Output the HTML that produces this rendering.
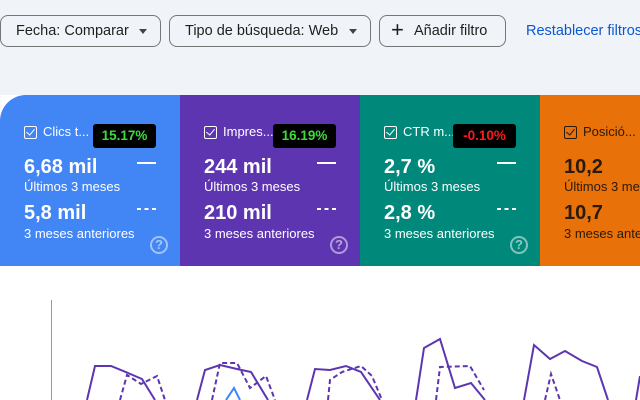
<!DOCTYPE html>
<html><head><meta charset="utf-8"><style>
*{margin:0;padding:0;box-sizing:border-box}
html,body{width:640px;height:400px;overflow:hidden}
body{background:#fff;font-family:"Liberation Sans",sans-serif;position:relative}
.top{position:absolute;left:0;top:0;width:640px;height:95px;background:#f0f4f9;overflow:hidden}
.btn{position:absolute;top:15px;height:32px;border:1px solid #747775;border-radius:8px;font-size:14.5px;color:#1f1f1f;line-height:30px;padding-left:15px}
.btn .arr{position:absolute;right:13px;top:13px;width:0;height:0;border-left:4px solid transparent;border-right:4px solid transparent;border-top:5px solid #444}
.link{position:absolute;left:526px;top:23px;font-size:14.5px;color:#0b57d0;white-space:nowrap}
.card{position:absolute;top:95px;height:171px;width:180px;color:#fff;overflow:hidden}
.cb{position:absolute;left:24px;top:31px;width:13px;height:13px;border:1.5px solid currentColor;border-radius:2px}
.cb:after{content:"";position:absolute;left:3px;top:0px;width:4px;height:7px;border-right:1.5px solid currentColor;border-bottom:1.5px solid currentColor;transform:rotate(40deg)}
.lab{position:absolute;left:43px;top:29px;font-size:13px}
.badge{position:absolute;left:93px;top:29px;width:63px;height:24px;background:#000;border-radius:3px;font-size:13.5px;font-weight:bold;text-align:center;line-height:24px}
.v{position:absolute;left:24px;font-size:20px;font-weight:bold}
.s{position:absolute;left:24px;font-size:13px}
.ln{position:absolute;left:137px;width:19px;height:2px;background:currentColor}
.ln.d{background:linear-gradient(90deg,currentColor 0 4px,transparent 4px 7.5px,currentColor 7.5px 11.5px,transparent 11.5px 15px,currentColor 15px 19px)}
.q{position:absolute;left:150px;top:141px;width:18px;height:18px;border:2px solid rgba(255,255,255,.5);border-radius:50%;font-size:13px;color:rgba(255,255,255,.55);text-align:center;line-height:14px;font-weight:bold}
</style></head><body>
<div class="top">
<div class="btn" style="left:0;width:161px">Fecha: Comparar<span class="arr"></span></div>
<div class="btn" style="left:169px;width:202px">Tipo de búsqueda: Web<span class="arr"></span></div>
<div class="btn" style="left:379px;width:127px;padding-left:34px"><span style="position:absolute;left:11px;top:-1px;font-size:22px;font-weight:300">+</span>Añadir filtro</div>
<div class="link">Restablecer filtros</div>
</div>
<div class="card" style="left:0;background:#4285f4;border-top-left-radius:26px">
<div class="cb"></div><div class="lab">Clics t...</div><div class="badge" style="color:#3ddc3d">15.17%</div>
<div class="v" style="top:61px">6,68 mil</div><div class="ln" style="top:67px"></div>
<div class="s" style="top:84px">Últimos 3 meses</div>
<div class="v" style="top:107px">5,8 mil</div><div class="ln d" style="top:113px"></div>
<div class="s" style="top:131px">3 meses anteriores</div><div class="q">?</div></div>
<div class="card" style="left:180px;background:#5e35b1">
<div class="cb"></div><div class="lab">Impres...</div><div class="badge" style="color:#3ddc3d">16.19%</div>
<div class="v" style="top:61px">244 mil</div><div class="ln" style="top:67px"></div>
<div class="s" style="top:84px">Últimos 3 meses</div>
<div class="v" style="top:107px">210 mil</div><div class="ln d" style="top:113px"></div>
<div class="s" style="top:131px">3 meses anteriores</div><div class="q">?</div></div>
<div class="card" style="left:360px;background:#00897b">
<div class="cb"></div><div class="lab">CTR m...</div><div class="badge" style="color:#ff1a1a">-0.10%</div>
<div class="v" style="top:61px">2,7 %</div><div class="ln" style="top:67px"></div>
<div class="s" style="top:84px">Últimos 3 meses</div>
<div class="v" style="top:107px">2,8 %</div><div class="ln d" style="top:113px"></div>
<div class="s" style="top:131px">3 meses anteriores</div><div class="q">?</div></div>
<div class="card" style="left:540px;width:100px;background:#e8710a;color:#2a1a08">
<div class="cb"></div><div class="lab">Posició...</div>
<div class="v" style="top:61px">10,2</div>
<div class="s" style="top:84px;white-space:nowrap">Últimos 3 meses</div>
<div class="v" style="top:107px">10,7</div>
<div class="s" style="top:131px;white-space:nowrap">3 meses anteriores</div></div>
<svg style="position:absolute;left:0;top:266px" width="640" height="134">
<line x1="51.5" y1="34" x2="51.5" y2="134" stroke="#999" stroke-width="1"/>
<g fill="none" stroke="#5e35b1" stroke-width="2">
<polyline points="87,134 95,100 111,100 128,107 142,113 155,134"/>
<polyline points="197,134 205,104 220,99 237,103 251,106 268,134"/>
<polyline points="307,134 315,103 330,104 346,100 361,106 380,134"/>
<polyline points="416,134 424,82 440,73 455,122 471,117 485,134"/>
<polyline points="524,134 534,79 550,93 565,85 582,95 597,101 608,134"/>
<polyline points="636,134 640,110"/>
</g>
<g fill="none" stroke="#5e35b1" stroke-width="2" stroke-dasharray="5,3">
<polyline points="120,134 127,109 141,118 157,110 165,134"/>
<polyline points="212,134 220,97 237,97 250,122 266,110 275,134"/>
<polyline points="328,134 330,114 342,106 361,100 372,110 382,134"/>
<polyline points="436,134 440,101 470,100 484,124"/>
<polyline points="545,134 551,108 560,134"/>
</g>
<polyline points="226,134 234,122 240,134" fill="none" stroke="#4285f4" stroke-width="2"/>
</svg>
</body></html>
